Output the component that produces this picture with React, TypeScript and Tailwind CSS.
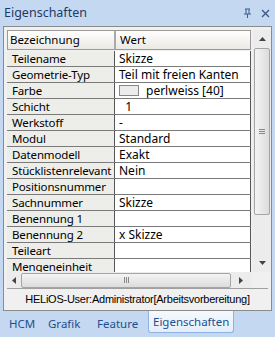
import React from "react";

const rows: { k: string; v: string; swatch?: boolean }[] = [
  { k: "Teilename", v: "Skizze" },
  { k: "Geometrie-Typ", v: "Teil mit freien Kanten" },
  { k: "Farbe", v: "perlweiss [40]", swatch: true },
  { k: "Schicht", v: "  1" },
  { k: "Werkstoff", v: "-" },
  { k: "Modul", v: "Standard" },
  { k: "Datenmodell", v: "Exakt" },
  { k: "Stücklistenrelevant", v: "Nein" },
  { k: "Positionsnummer", v: "" },
  { k: "Sachnummer", v: "Skizze" },
  { k: "Benennung 1", v: "" },
  { k: "Benennung 2", v: "x Skizze" },
  { k: "Teileart", v: "" },
  { k: "Mengeneinheit", v: "" },
];

const font = { fontFamily: '"Noto Sans", "Open Sans", sans-serif' };

export default function App() {
  return (
    <div
      className="w-[275px] h-[337px] bg-[#c4d9f1] flex flex-col overflow-hidden text-black"
      style={font}
    >
      {/* title */}
      <div className="h-[26px] flex items-center justify-between pl-[4px] pr-[5px]">
        <span className="text-[12.5px] text-[#1e3a66] leading-none">Eigenschaften</span>
        <div className="flex items-center gap-[9px] text-[#3d5b86]">
          <svg width="9" height="10" viewBox="0 0 9 10">
            <path d="M2 1h5M3 1v5M6 1v5M1 6h7M4.5 6v4" stroke="currentColor" strokeWidth="1" fill="none" />
          </svg>
          <svg width="9" height="9" viewBox="0 0 9 9">
            <path d="M1 1l7 7M8 1l-7 7" stroke="currentColor" strokeWidth="1.4" fill="none" />
          </svg>
        </div>
      </div>

      {/* panel */}
      <div className="mx-[3px] h-[285px] border border-[#8b8b8b] bg-[#f0f0f0] flex flex-col">
        <div className="flex h-[245px] pt-[3px] pl-[3px]">
          <div className="w-[244px] flex flex-col overflow-hidden">
            {/* header */}
            <div className="flex h-[20px] shrink-0 border border-[#9a9a9a] bg-gradient-to-b from-white to-[#ebe9e3] text-[11.5px]">
              <div className="w-[108px] pl-[2px] flex items-center border-r-2 border-[#aaa]">Bezeichnung</div>
              <div className="flex-1 pl-[4px] flex items-center">Wert</div>
            </div>
            <div className="h-[1px] shrink-0" />
            {rows.map((r) => (
              <div key={r.k} className="flex h-[16px] shrink-0 border-b border-[#7a7a7a] leading-[15px]">
                <div className="w-[108px] pl-[5px] bg-[#ededea] border-r border-[#555] whitespace-nowrap tracking-[-0.15px] text-[11.5px]">
                  {r.k}
                </div>
                <div className="flex-1 bg-white pl-[4px] flex items-center whitespace-pre overflow-hidden border-r border-[#555] text-[12px]">
                  {r.swatch && (
                    <span className="inline-block w-[20px] h-[11px] border border-[#888] bg-[#ececec] mr-[7px]" />
                  )}
                  {r.v}
                </div>
              </div>
            ))}
          </div>
          {/* vertical scrollbar */}
          <div className="ml-[2px] w-[18px] flex flex-col bg-[#ececec]">
            <div className="h-[18px] flex items-center justify-center">
              <svg width="7" height="4" viewBox="0 0 7 4"><path d="M0 4L3.5 0L7 4z" fill="#444" /></svg>
            </div>
            <div className="h-[167px] mx-[1px] rounded-[2px] border border-[#a5a5a5] bg-gradient-to-r from-[#f4f4f4] to-[#dcdcdc] flex items-center justify-center">
              <div className="flex flex-col gap-[1px]">
                <div className="w-[6px] h-[1px] bg-[#888]" />
                <div className="w-[6px] h-[1px] bg-[#888]" />
                <div className="w-[6px] h-[1px] bg-[#888]" />
              </div>
            </div>
            <div className="flex-1" />
            <div className="h-[18px] flex items-center justify-center">
              <svg width="7" height="4" viewBox="0 0 7 4"><path d="M0 0L3.5 4L7 0z" fill="#444" /></svg>
            </div>
          </div>
        </div>
        {/* horizontal scrollbar */}
        <div className="flex h-[16px] pl-[3px]">
          <div className="w-[244px] flex items-center bg-[#ececec]">
            <div className="w-[14px] flex justify-center">
              <svg width="4" height="7" viewBox="0 0 4 7"><path d="M4 0L0 3.5L4 7z" fill="#444" /></svg>
            </div>
            <div className="w-[210px] h-[15px] rounded-[2px] border border-[#a5a5a5] bg-gradient-to-b from-[#f4f4f4] to-[#dcdcdc] flex items-center justify-center">
              <div className="flex gap-[1px]">
                <div className="w-[1px] h-[6px] bg-[#888]" />
                <div className="w-[1px] h-[6px] bg-[#888]" />
                <div className="w-[1px] h-[6px] bg-[#888]" />
              </div>
            </div>
            <div className="flex-1 flex justify-center">
              <svg width="4" height="7" viewBox="0 0 4 7"><path d="M0 0L4 3.5L0 7z" fill="#444" /></svg>
            </div>
          </div>
        </div>
        {/* status */}
        <div className="flex-1 flex items-center justify-center border-t border-[#a0a0a0] mx-[3px] text-[11px] tracking-[-0.25px]" style={{ fontFamily: '"Liberation Sans", Arial, sans-serif' }}>
          HELiOS-User:Administrator[Arbeitsvorbereitung]
        </div>
      </div>

      {/* tabs */}
      <div className="flex items-start h-[26px] text-[11.5px] text-[#1d4f8f]">
        <div className="pl-[9px] pt-[4px] w-[48px] shrink-0">HCM</div>
        <div className="pt-[4px] w-[49px] shrink-0">Grafik</div>
        <div className="pt-[4px] w-[51px] shrink-0">Feature</div>
        <div className="h-[22px] w-[86px] shrink-0 pl-[4px] flex items-center border border-t-0 border-[#8db2e3] rounded-b-[3px] bg-gradient-to-b from-[#f5f9fe] to-[#e4eefb]">
          Eigenschaften
        </div>
      </div>
    </div>
  );
}
